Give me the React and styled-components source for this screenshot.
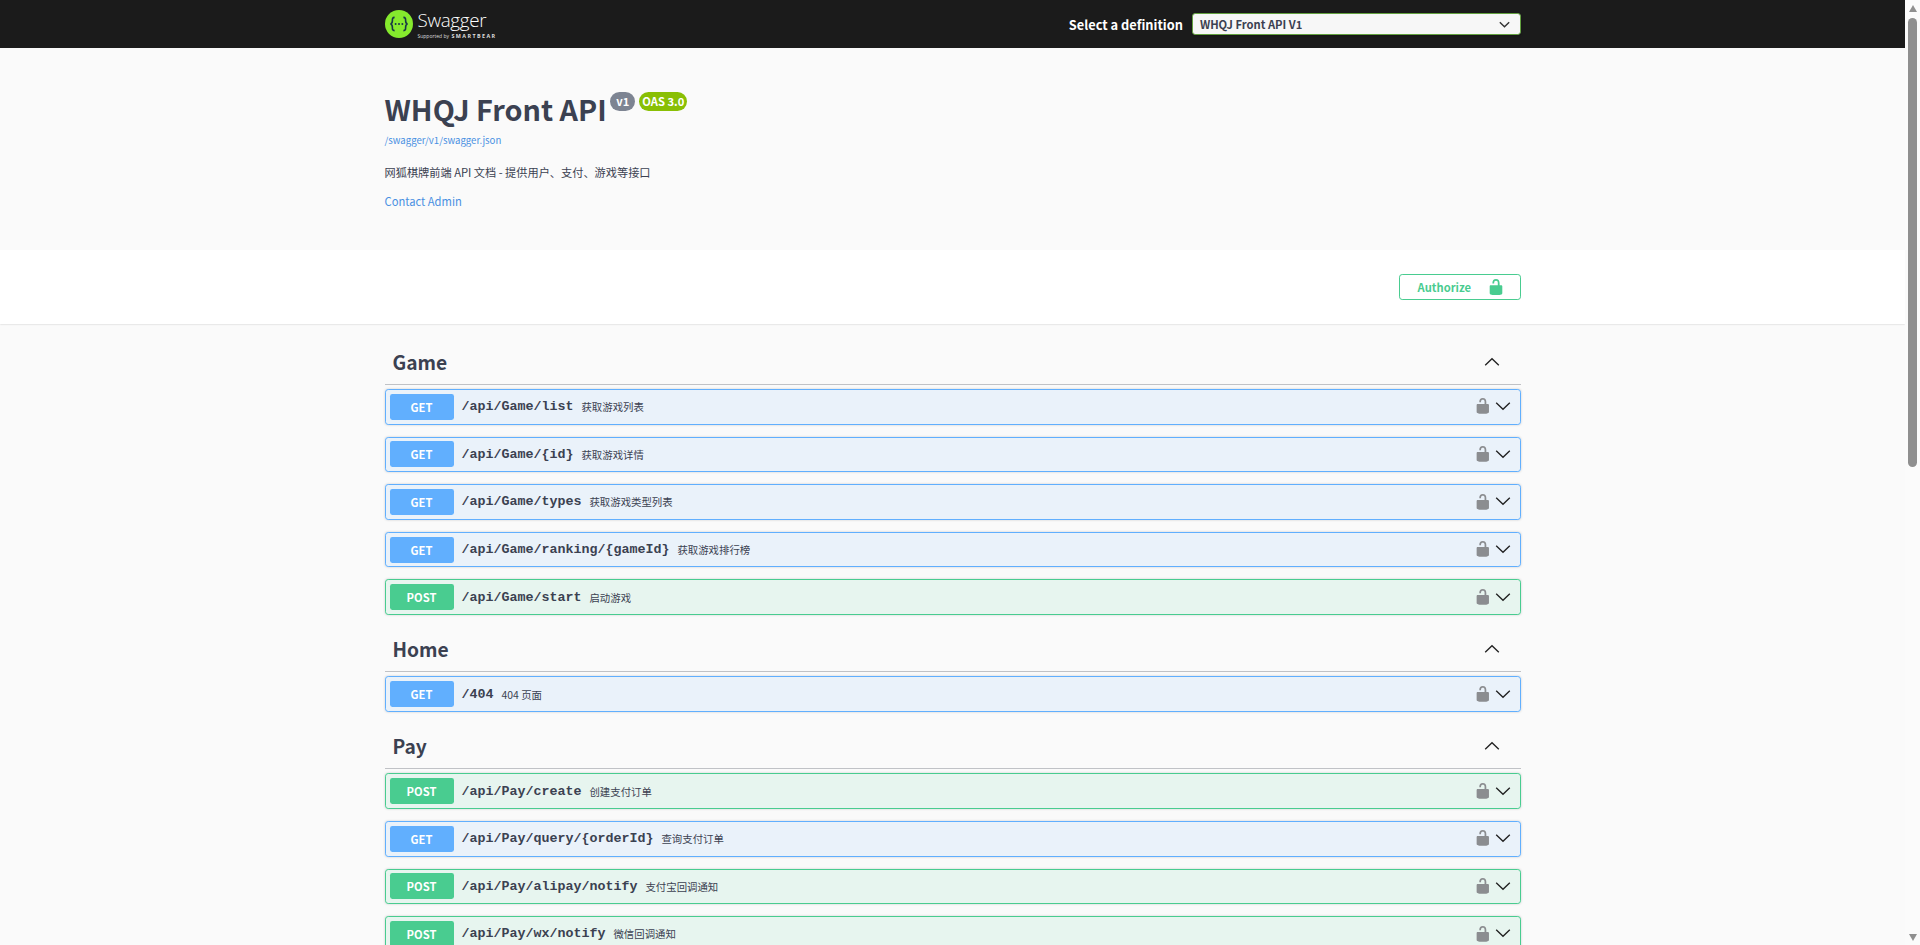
import React from "react";
import styled, { createGlobalStyle } from "styled-components";

const sections = [
  {
    name: "Game",
    ops: [
      ["GET", "/api/Game/list", "获取游戏列表"],
      ["GET", "/api/Game/{id}", "获取游戏详情"],
      ["GET", "/api/Game/types", "获取游戏类型列表"],
      ["GET", "/api/Game/ranking/{gameId}", "获取游戏排行榜"],
      ["POST", "/api/Game/start", "启动游戏"],
    ],
  },
  { name: "Home", ops: [["GET", "/404", "404 页面"]] },
  {
    name: "Pay",
    ops: [
      ["POST", "/api/Pay/create", "创建支付订单"],
      ["GET", "/api/Pay/query/{orderId}", "查询支付订单"],
      ["POST", "/api/Pay/alipay/notify", "支付宝回调通知"],
      ["POST", "/api/Pay/wx/notify", "微信回调通知"],
    ],
  },
];

const colors = {
  GET: { main: "#61affe", tint: "rgba(97,175,254,.1)" },
  POST: { main: "#49cc90", tint: "rgba(73,204,144,.1)" },
};

const Global = createGlobalStyle`
  html, body {
    margin: 0;
    height: 100%;
    overflow: hidden;
    background: #fafafa;
    font-family: "Noto Sans CJK SC", "Noto Sans", sans-serif;
    color: #3b4151;
  }
`;

const Page = styled.div`
  display: flex;
  height: 945px;
`;
const Main = styled.div`
  flex: 1;
  min-width: 0;
  overflow: hidden;
`;
const Inner = styled.div`
  width: 1136px;
  margin: 0 auto;
`;

const Topbar = styled.div`
  height: 48px;
  background: #1b1b1b;
`;
const TopbarInner = styled(Inner)`
  height: 100%;
  display: flex;
  align-items: center;
  justify-content: space-between;
`;
const Logo = styled.div`
  display: flex;
  align-items: center;
  gap: 5px;
  margin-top: -1px;
`;
const LogoText = styled.div`
  display: flex;
  flex-direction: column;
  color: #fff;
`;
const LogoName = styled.span`
  font-family: "Open Sans", sans-serif;
  font-size: 18.8px;
  font-weight: 300;
  line-height: 24px;
  letter-spacing: -0.3px;
`;
const LogoSub = styled.span`
  font-family: "Open Sans", sans-serif;
  font-size: 5px;
  line-height: 7px;
  margin-top: 1px;
  white-space: nowrap;
  color: #ddd;
`;
const LogoBear = styled.b`
  font-size: 5.4px;
  letter-spacing: 1.4px;
  margin-left: 2.5px;
`;
const Definition = styled.div`
  display: flex;
  align-items: center;
  gap: 8.8px;
`;
const DefinitionLabel = styled.span`
  font-size: 12.8px;
  font-weight: 700;
  color: #fff;
`;
const SelectBox = styled.div`
  box-sizing: border-box;
  width: 328.8px;
  height: 22px;
  display: flex;
  align-items: center;
  justify-content: space-between;
  padding: 0 9.4px 0 7.2px;
  background: #f7f7f7;
  border: 1.6px solid #62a03f;
  border-radius: 3.2px;
  font-size: 11.2px;
  font-weight: 700;
  box-shadow: 0 1px 2px 0 rgba(0, 0, 0, 0.25);
`;

const Info = styled.div`
  height: 202px;
  box-sizing: border-box;
  padding-top: 38px;
`;
const TitleRow = styled.div`
  display: flex;
  align-items: flex-start;
`;
const Title = styled.h2`
  margin: 0;
  font-size: 28.8px;
  line-height: 46px;
  font-weight: 700;
  color: #3b4151;
`;
const Badge = styled.span`
  height: 19px;
  margin: 6px 0 0 ${(p) => p.$gap}px;
  padding: 0 ${(p) => p.$pad}px;
  border-radius: 9.5px;
  background: ${(p) => p.$bg};
  color: #fff;
  font-size: 11.2px;
  font-weight: 700;
  line-height: 18px;
`;
const SpecLink = styled.div`
  font-size: 9.6px;
  line-height: 14px;
  margin-top: 1px;
  color: #4990e2;
`;
const Description = styled.div`
  font-size: 11.2px;
  line-height: 16px;
  margin-top: 16.6px;
  color: #3b4151;
`;
const Contact = styled.div`
  font-size: 11.2px;
  line-height: 16px;
  margin-top: 13px;
  color: #4990e2;
`;

const Scheme = styled.div`
  height: 74.4px;
  box-sizing: border-box;
  background: #fff;
  box-shadow: 0 0.8px 1.6px 0 rgba(0, 0, 0, 0.15);
  padding-top: 24px;
`;
const SchemeInner = styled(Inner)`
  display: flex;
  justify-content: flex-end;
`;
const Authorize = styled.button`
  box-sizing: border-box;
  width: 122px;
  height: 26px;
  display: flex;
  align-items: center;
  justify-content: space-between;
  padding: 0 15px 0 18px;
  background: transparent;
  border: 1.6px solid #49cc90;
  border-radius: 3.2px;
  color: #49cc90;
  font-family: inherit;
  font-size: 11.2px;
  font-weight: 700;
`;

const Sections = styled(Inner)`
  padding-top: 15.2px;
`;
const TagHeader = styled.div`
  box-sizing: border-box;
  height: 45.4px;
  display: flex;
  align-items: center;
  justify-content: space-between;
  padding: 0 21px 0 8px;
  margin-bottom: 4px;
  border-bottom: 0.8px solid rgba(59, 65, 81, 0.3);
`;
const TagName = styled.h3`
  margin: 0;
  font-size: 19.2px;
  font-weight: 700;
  color: #3b4151;
`;
const Row = styled.div`
  box-sizing: border-box;
  height: 35.6px;
  margin-bottom: 12px;
  display: flex;
  align-items: center;
  padding: 0 4px;
  background: ${(p) => colors[p.$method].tint};
  border: 0.8px solid ${(p) => colors[p.$method].main};
  border-radius: 3.2px;
  box-shadow: 0 0 2.4px rgba(0, 0, 0, 0.19);
`;
const Method = styled.span`
  width: 64px;
  height: 26px;
  flex: none;
  display: flex;
  align-items: center;
  justify-content: center;
  background: ${(p) => colors[p.$method].main};
  border-radius: 2.4px;
  color: #fff;
  font-size: 11.2px;
  font-weight: 700;
`;
const Path = styled.span`
  margin-left: 8px;
  font-family: "Liberation Mono", monospace;
  font-size: 13.33px;
  font-weight: 700;
  color: #3b4151;
`;
const Summary = styled.span`
  flex: 1;
  margin-left: 8px;
  font-size: 10.4px;
  color: #3b4151;
`;
const RowIcons = styled.div`
  display: flex;
  align-items: center;
  gap: 3.4px;
  margin-right: 5px;
  margin-top: -1px;
`;

const ScrollTrack = styled.div`
  width: 15px;
  flex: none;
  display: flex;
  flex-direction: column;
  align-items: center;
  background: #fbfbfb;
  padding: 5px 0 4px;
  box-sizing: border-box;
  height: 100%;
`;
const ScrollArrow = styled.div`
  width: 0;
  height: 0;
  border-left: 4.5px solid transparent;
  border-right: 4.5px solid transparent;
  ${(p) => (p.$down ? "border-top" : "border-bottom")}: 7px solid #8f8f8f;
  ${(p) => p.$down && "margin-top: auto;"}
`;
const ScrollThumb = styled.div`
  width: 9px;
  height: 449px;
  margin-top: 6px;
  border-radius: 5px;
  background: #8f8f8f;
`;

const LockIcon = ({ size = 17.6, color = "#8b8d90" }) => (
  <svg width={size} height={size} viewBox="0 0 20 20" fill={color}>
    <path d="M15.8 8H14V5.6C14 2.703 12.665 1 10 1 7.334 1 6 2.703 6 5.6V6h2v-.801C8 3.754 8.797 3 10 3c1.203 0 2 .754 2 2.199V8H4c-.553 0-1 .646-1 1.199V17c0 .549.428 1.139.951 1.307l1.197.387C5.672 18.861 6.55 19 7.1 19h5.8c.549 0 1.428-.139 1.951-.307l1.196-.387c.524-.167.953-.757.953-1.306V9.199C17 8.646 16.352 8 15.8 8z" />
  </svg>
);

const Chevron = ({ up, w = 16, color = "#222", weight = 1.7 }) => (
  <svg width={w} height={w} viewBox="0 0 20 20" fill="none" stroke={color} strokeWidth={weight}>
    <path d={up ? "M1.5 14 10 6l8.5 8" : "M1.5 6 10 14l8.5-8"} />
  </svg>
);

const SwaggerMark = () => (
  <svg width="28" height="28" viewBox="0 0 28 28">
    <circle cx="14" cy="14" r="14" fill="#85ea2d" />
    <g fill="none" stroke="#173647" strokeWidth="1.6">
      <path d="M9.6 7.4c-2.4 0-2.2 1.6-2.2 3.2 0 1.8-.4 3.2-2 3.4 1.6.2 2 1.6 2 3.4 0 1.6-.2 3.2 2.2 3.2" />
      <path d="M18.4 7.4c2.4 0 2.2 1.6 2.2 3.2 0 1.8.4 3.2 2 3.4-1.6.2-2 1.6-2 3.4 0 1.6.2 3.2-2.2 3.2" />
    </g>
    <g fill="#173647">
      <circle cx="10.6" cy="14" r="1" />
      <circle cx="14" cy="14" r="1" />
      <circle cx="17.4" cy="14" r="1" />
    </g>
  </svg>
);

const Operation = ({ method, path, summary }) => (
  <Row $method={method}>
    <Method $method={method}>{method}</Method>
    <Path>{path}</Path>
    <Summary>{summary}</Summary>
    <RowIcons>
      <LockIcon />
      <Chevron />
    </RowIcons>
  </Row>
);

export default function App() {
  return (
    <Page>
      <Global />
      <Main>
        <Topbar>
          <TopbarInner>
            <Logo>
              <SwaggerMark />
              <LogoText>
                <LogoName>Swagger</LogoName>
                <LogoSub>
                  Supported by<LogoBear>SMARTBEAR</LogoBear>
                </LogoSub>
              </LogoText>
            </Logo>
            <Definition>
              <DefinitionLabel>Select a definition</DefinitionLabel>
              <SelectBox>
                WHQJ Front API V1
                <Chevron w={11} color="#333" weight={2.6} />
              </SelectBox>
            </Definition>
          </TopbarInner>
        </Topbar>
        <Info>
          <Inner>
            <TitleRow>
              <Title>WHQJ Front API</Title>
              <Badge $bg="#7d8492" $gap={3.5} $pad={6}>v1</Badge>
              <Badge $bg="#89bf04" $gap={4} $pad={3}>OAS 3.0</Badge>
            </TitleRow>
            <SpecLink>/swagger/v1/swagger.json</SpecLink>
            <Description>网狐棋牌前端 API 文档 - 提供用户、支付、游戏等接口</Description>
            <Contact>Contact Admin</Contact>
          </Inner>
        </Info>
        <Scheme>
          <SchemeInner>
            <Authorize>
              Authorize
              <LockIcon size={18} color="#49cc90" />
            </Authorize>
          </SchemeInner>
        </Scheme>
        <Sections>
          {sections.map((s) => (
            <section key={s.name}>
              <TagHeader>
                <TagName>{s.name}</TagName>
                <Chevron up />
              </TagHeader>
              {s.ops.map(([m, p, d]) => (
                <Operation key={p} method={m} path={p} summary={d} />
              ))}
            </section>
          ))}
        </Sections>
      </Main>
      <ScrollTrack>
        <ScrollArrow />
        <ScrollThumb />
        <ScrollArrow $down />
      </ScrollTrack>
    </Page>
  );
}
